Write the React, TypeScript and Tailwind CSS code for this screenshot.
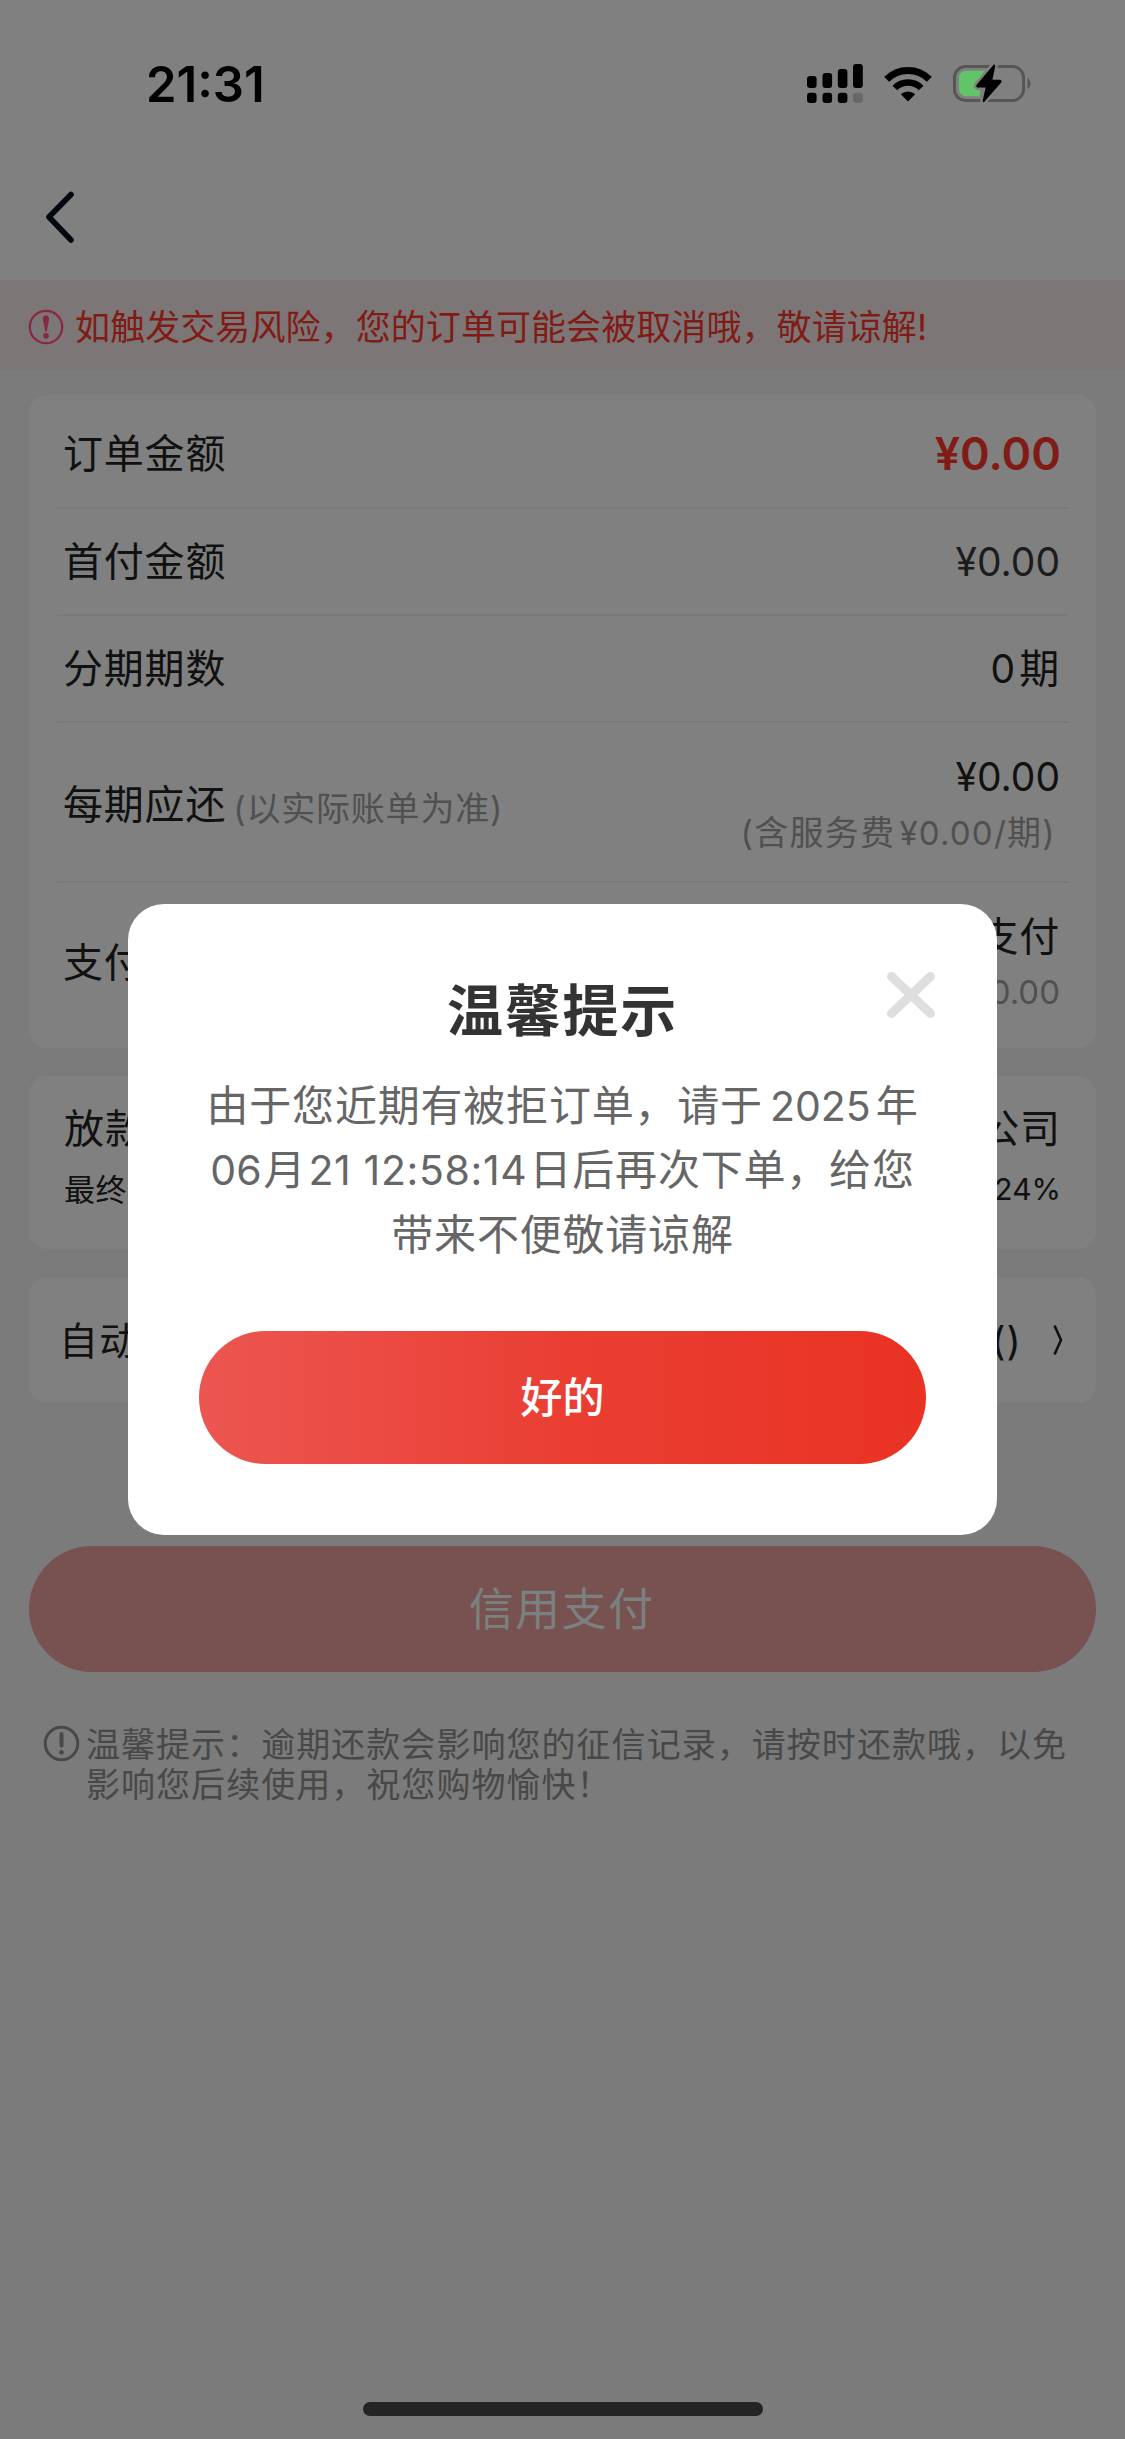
import type { ReactNode } from "react";

function SignalIcon() {
  return (
    <svg width="58" height="42" viewBox="0 0 58 42" className="block">
      <rect x="1" y="13" width="9.6" height="12" rx="3" />
      <rect x="16.5" y="10" width="9.6" height="15" rx="3" />
      <rect x="31.8" y="6" width="9.6" height="19" rx="3" />
      <rect x="47" y="1" width="9.8" height="24" rx="3" />
      <rect x="1" y="29.7" width="9.6" height="10.3" rx="3" />
      <rect x="16.5" y="29.7" width="9.6" height="10.3" rx="3" />
      <rect x="31.8" y="29.7" width="9.6" height="10.3" rx="3" />
      <rect x="47" y="29.7" width="9.8" height="10.3" rx="3" fill="#686868" />
    </svg>
  );
}

function WifiIcon() {
  return (
    <svg width="48" height="36" viewBox="0 0 48 36" className="block" fill="none" stroke="#000">
      <path d="M2.6 13.2A30.5 30.5 0 0 1 45.4 13.2" strokeWidth="7" />
      <path d="M10.8 22A18.6 18.6 0 0 1 37.2 22" strokeWidth="6.6" />
      <path d="M24 35.5L16.8 28.3A10.4 10.4 0 0 1 31.2 28.3Z" fill="#000" stroke="none" />
    </svg>
  );
}

function BatteryIcon() {
  return (
    <svg width="80" height="42" viewBox="0 0 80 42" className="block">
      <rect x="2.5" y="3.5" width="69" height="34" rx="11" fill="none" stroke="#565656" strokeWidth="3" />
      <path d="M75.5 15.2C79.6 17 79.6 24 75.5 25.8Z" fill="#565656" />
      <path d="M14 7.7H33L22 22.5H29L27.5 33.3H14A7 7 0 0 1 7 26.3V14.7A7 7 0 0 1 14 7.7Z" fill="#62c466" />
      <path
        d="M41.8 1.6Q43.5 1.2 43.2 3.4L40.4 16.8H48Q50.3 17.3 49.2 19.4L32.6 38.6Q30.5 40.2 30.7 37.6L33.6 24.6H25.8Q23.3 24 24.7 21.8Z"
        fill="#000"
        stroke="#808080"
        strokeWidth="5"
        paintOrder="stroke"
      />
    </svg>
  );
}

function Row({ className, label, children }: { className: string; label: ReactNode; children: ReactNode }) {
  return (
    <div className={`mx-7 flex items-center justify-between border-b-2 border-[#797979] pr-[8px] pl-[6px] ${className}`}>
      <div className="flex items-center">{label}</div>
      <div className="flex flex-col items-end text-right">{children}</div>
    </div>
  );
}

export default function App() {
  return (
    <div className="relative flex h-[2439px] w-[1125px] flex-col overflow-hidden bg-[#7b7b7b] font-['Inter','Noto_Sans_CJK_SC',sans-serif] whitespace-nowrap text-[#111]">
      <header className="flex h-[280px] flex-col bg-[#808080]">
        <div className="flex h-[168px] items-center justify-between pr-[93px] pl-[146px]">
          <span className="text-[49px] leading-none font-semibold text-black">21:31</span>
          <div className="flex items-center">
            <SignalIcon />
            <span className="ml-[20px]">
              <WifiIcon />
            </span>
            <span className="ml-[20px]">
              <BatteryIcon />
            </span>
          </div>
        </div>
        <svg width="34" height="54" viewBox="0 0 34 54" className="mt-[22px] ml-[43px]" fill="none">
          <path d="M28 4.5L6 27L28 50" stroke="#02060f" strokeWidth="5.6" strokeLinecap="round" strokeLinejoin="round" />
        </svg>
      </header>

      <div className="flex h-[90px] items-center bg-[#7d7677] pt-[4px] pl-[28px] text-[35px] leading-none text-[#811b16]">
        <svg width="36" height="36" viewBox="0 0 36 36" className="mr-[11px] block" fill="none">
          <circle cx="18" cy="18" r="16.2" stroke="#8c2740" strokeWidth="2.3" />
          <path d="M18 6.5C21.2 6.5 21.4 9 20.8 12L18.8 22.5H17.2L15.2 12C14.6 9 14.8 6.5 18 6.5Z" fill="#8c2740" />
          <circle cx="18" cy="26.8" r="2.9" fill="#8c2740" />
        </svg>
        <span className="tracking-[0.08px]">如触发交易风险，您的订单可能会被取消哦，敬请谅解!</span>
      </div>

      <section className="mx-[29px] mt-[25px] flex h-[653px] flex-col rounded-[18px] bg-[#808080] text-[40px] leading-none tracking-[0.8px]">
        <Row className="h-[114px] pt-[5px]" label="订单金额">
          <span className="-mr-[1px] text-[45px] font-semibold tracking-[0px] text-[#811b16]">¥0.00</span>
        </Row>
        <Row className="h-[107px]" label="首付金额">
          <span className="text-[39px] tracking-[0px] text-[#1c1c1c]">¥0.00</span>
        </Row>
        <Row className="h-[107px]" label="分期期数">
          <span className="flex gap-[4px]">
            <span className="text-[39px] leading-[40px] tracking-[0px]">0</span>
            <span>期</span>
          </span>
        </Row>
        <Row
          className="h-[160px] pt-[2px]"
          label={
            <>
              <span className="mt-[4px]">每期应还</span>
              <span className="mt-[11px] ml-[7px] text-[34px] text-[#505050]">(以实际账单为准)</span>
            </>
          }
        >
          <span className="text-[39px] tracking-[0px]">¥0.00</span>
          <span className="mt-[20px] mr-[4px] flex text-[34px] tracking-[1.3px] text-[#505050]">
            (含服务费<span className="ml-[4px] text-[33px] leading-[34px] tracking-[1.2px]">¥0.00/</span>
            期)
          </span>
        </Row>
        <div className="mx-7 flex flex-1 items-center justify-between pr-[8px] pb-[5px] pl-[6px]">
          <span>支付</span>
          <div className="flex flex-col items-end">
            <span>支付</span>
            <span className="mt-[19px] text-[33px] tracking-[0px] text-[#505050]">0.00</span>
          </div>
        </div>
      </section>

      <section className="mx-[29px] mt-[28px] flex h-[173px] flex-col rounded-[18px] bg-[#808080] px-[35px] pt-[33px] leading-none">
        <div className="flex justify-between text-[40px] tracking-[0.9px]">
          <span>放款</span>
          <span>公司</span>
        </div>
        <div className="mt-[25px] flex justify-between text-[31px] tracking-[0.5px]">
          <span>最终</span>
          <span className="text-[30px] tracking-[0px]">24%</span>
        </div>
      </section>

      <section className="mx-[29px] mt-[28px] flex h-[126px] items-center justify-between rounded-[18px] bg-[#808080] pr-[33px] pl-[30px] text-[39px] leading-none tracking-[1.2px]">
        <span>自动</span>
        <span className="flex items-center">
          ()
          <svg width="10" height="32" viewBox="0 0 10 32" className="ml-[31px]" fill="none" stroke="#111" strokeWidth="2.6">
            <path d="M1.5 1.5L8 16L1.5 30.5" />
          </svg>
        </span>
      </section>

      <button className="mx-[29px] mt-[143px] flex h-[126px] items-center justify-center rounded-full bg-[#775250] pr-[2px] text-[45px] leading-none tracking-[1.4px] text-[#7b8180]">
        信用支付
      </button>

      <div className="mt-[53px] ml-[43px] flex text-[34px] leading-[40.3px] tracking-[1.04px] text-[#484848]">
        <svg width="37" height="37" viewBox="0 0 37 37" className="mr-[6px]" fill="none" stroke="#484848">
          <circle cx="18.5" cy="18.5" r="16.3" strokeWidth="3" />
          <path d="M18.5 9V20.5" strokeWidth="4" strokeLinecap="round" />
          <circle cx="18.5" cy="27.3" r="2.4" fill="#484848" stroke="none" />
        </svg>
        <p>
          温馨提示：逾期还款会影响您的征信记录，请按时还款哦，以免
          <br />
          影响您后续使用，祝您购物愉快！
        </p>
      </div>

      <div className="mt-auto mb-[23px] h-[14px] w-[400px] self-center rounded-full bg-[#242424]" />

      <div className="absolute top-[904px] left-[128px] flex h-[631px] w-[869px] flex-col items-center rounded-[36px] bg-white">
        <h1 className="mt-[79px] text-[56px] leading-none font-bold tracking-[1.8px] text-[#333]">温馨提示</h1>
        <svg
          width="52"
          height="48"
          viewBox="0 0 52 48"
          className="absolute top-[67px] right-[60px]"
          fill="none"
          stroke="#dedede"
          strokeWidth="9"
          strokeLinecap="round"
        >
          <path d="M6.5 5.5L45.5 42.5M45.5 5.5L6.5 42.5" />
        </svg>
        <div className="mt-[35px] flex flex-col items-center text-[42px] leading-[64.3px] tracking-[0.8px] text-[#666]">
          <span className="flex">
            由于您近期有被拒订单，请于
            <span className="mr-[5px] ml-[7px] text-[41px] tracking-[0px]">2025</span>年
          </span>
          <span className="flex">
            <span className="mr-[2px] text-[41px] tracking-[0px]">06</span>月
            <span className="ml-[2px] text-[41px] tracking-[0.65px]">21&nbsp;12:58:14</span>
            <span className="ml-[2px]">日后再次下单，给您</span>
          </span>
          <span>带来不便敬请谅解</span>
        </div>
        <button className="mt-[64px] flex h-[133px] w-[727px] items-center justify-center rounded-full bg-linear-to-r from-[#ec5550] via-[#ea3e33] via-50% to-[#e93223] pt-[2px] text-[42px] leading-none font-medium tracking-[0px] text-white">
          好的
        </button>
      </div>
    </div>
  );
}
